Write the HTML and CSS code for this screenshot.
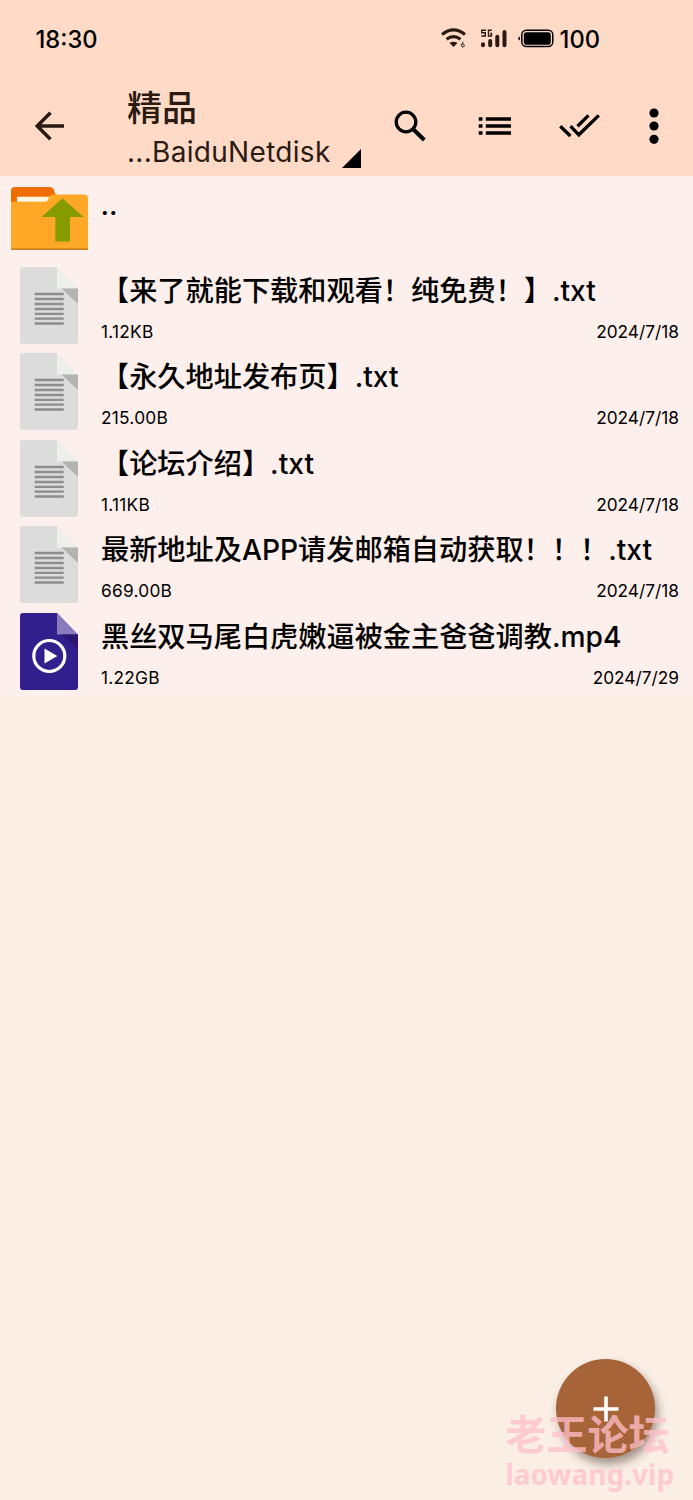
FILE: index.html
```html
<!DOCTYPE html>
<html lang="zh-CN">
<head>
<meta charset="utf-8">
<title>精品</title>
<link rel="stylesheet" href="styles.css">
</head>
<body>
<svg class="defs" width="0" height="0">
  <symbol id="txt" viewBox="0 0 58 77">
    <path d="M3 0H37L58 22V74a3 3 0 0 1-3 3H3a3 3 0 0 1-3-3V3a3 3 0 0 1 3-3Z" fill="#dbdcdb"/>
    <path d="M37 0L58 21.500H37Z" fill="#edefed"/>
    <path d="M41.500 21.500H58V37Z" fill="#b3b3b1"/>
    <path d="M14.700 27H43.700M14.700 32H43.700M14.700 37H43.700M14.700 42H43.700M14.700 46.800H43.700M14.700 51.600H43.700M14.700 56.500H43.700" stroke="#8c8d8c" stroke-width="2.300"/>
  </symbol>
</svg>
<div class="screen">
  <header class="header">
    <div class="status">
      <span class="clock">18:30</span>
      <svg class="status-icons" width="120" height="26" viewBox="0 0 120 26">
        <g fill="none" stroke="#2a1a12" stroke-width="3">
          <path d="M1 9.500Q12.500.2 24 9.500"/>
          <path d="M5.500 14.200Q12.500 9 19.500 14.200"/>
        </g>
        <path d="M8.500 18q4-2.400 8 0l-4 4z" fill="#2a1a12"/>
        <path d="M22.300 16.800l-1.700 2.800" stroke="#2a1a12" fill="none"/>
        <circle cx="21.800" cy="20.500" r="1.500" fill="none" stroke="#2a1a12"/>
        <g stroke="#2a1a12" stroke-width="4" stroke-linecap="round">
          <path d="M42 19.300V20.300M49.200 16V20.300M56.300 11.800V20.300M63.500 7V20.300"/>
        </g>
        <path d="M45 5.200H40.700V7.800H44.300V11H40.300M50.800 5.200H47.500V11H50.500V8.500H49.200" fill="none" stroke="#2a1a12" stroke-width="1.400"/>
        <rect x="80.800" y="5.300" width="31" height="16.300" rx="4.500" fill="none" stroke="#000" stroke-width="1.500"/>
        <rect x="82.800" y="7.200" width="27" height="12.500" rx="2.800" fill="#000"/>
        <path d="M79 11.500v4q-1.800-.5-1.800-2t1.800-2" fill="#000"/>
      </svg>
      <span class="battery">100</span>
    </div>
    <div class="toolbar">
      <svg class="back" width="30" height="30" viewBox="0 0 30 30"><path d="M29 15H3M15.500 1.700L2.200 15L15.500 28.300" fill="none" stroke="#2a1a12" stroke-width="3.500"/></svg>
      <div class="titles">
        <div class="title">精品</div>
        <div class="path"><span>...BaiduNetdisk</span><svg width="19" height="19" viewBox="0 0 19 19"><path d="M19 0V19H0Z"/></svg></div>
      </div>
      <svg class="search" width="32" height="32" viewBox="0 0 32 32"><circle cx="12" cy="12" r="9.800" fill="none" stroke="#000" stroke-width="3.300"/><path d="M19 19L30.300 30" stroke="#000" stroke-width="4"/></svg>
      <svg class="list-icon" width="33" height="20" viewBox="0 0 33 20"><path d="M.7 3H4.500M7.800 3H33M.7 10H4.500M7.800 10H33M.7 17H4.500M7.800 17H33" stroke="#000" stroke-width="3.600"/></svg>
      <svg class="checks" width="41" height="24" viewBox="0 0 41 24"><path d="M1.300 12.300L11.400 22M11.500 12.200L19.800 20.800L39.800 1.400M18.500 12.200L29.500 1.400" fill="none" stroke="#000" stroke-width="3.300"/></svg>
      <svg class="more" width="10" height="36" viewBox="0 0 10 36"><circle cx="5" cy="5" r="4.600"/><circle cx="5" cy="18" r="4.600"/><circle cx="5" cy="31.300" r="4.600"/></svg>
    </div>
  </header>
  <main class="files">
    <div class="row parent">
      <svg class="folder" width="77" height="63" viewBox="0 0 77 63">
        <path d="M0 16V4Q0 0 4 0H39Q41.500 0 42.500 2L47 14V20H0Z" fill="#ef6c00"/>
        <path d="M6 9.800H40V16H6Z" fill="#fff5e0"/>
        <path d="M0 14.700H34Q37 14.500 37.500 11Q38.500 7.500 42 7.500H73Q77 7.500 77 11V63H0Z" fill="#ffa726"/>
        <path d="M0 61.300H77V63H0Z" fill="#cf8420"/>
        <path d="M51.500 11.300L72.500 30H59V54.500H44.300V30H30.500Z" fill="#869b00"/>
      </svg>
      <div class="info"><div class="name">..</div></div>
    </div>
    <div class="row">
      <svg class="file" width="58" height="77"><use href="#txt"/></svg>
      <div class="info"><div class="name">【来了就能下载和观看！纯免费！】.txt</div><div class="meta"><span class="size">1.12KB</span><span class="date">2024/7/18</span></div></div>
    </div>
    <div class="row">
      <svg class="file" width="58" height="77"><use href="#txt"/></svg>
      <div class="info"><div class="name">【永久地址发布页】.txt</div><div class="meta"><span class="size">215.00B</span><span class="date">2024/7/18</span></div></div>
    </div>
    <div class="row">
      <svg class="file" width="58" height="77"><use href="#txt"/></svg>
      <div class="info"><div class="name">【论坛介绍】.txt</div><div class="meta"><span class="size">1.11KB</span><span class="date">2024/7/18</span></div></div>
    </div>
    <div class="row">
      <svg class="file" width="58" height="77"><use href="#txt"/></svg>
      <div class="info"><div class="name">最新地址及APP请发邮箱自动获取！！！.txt</div><div class="meta"><span class="size">669.00B</span><span class="date">2024/7/18</span></div></div>
    </div>
    <div class="row">
      <svg class="file" width="58" height="77" viewBox="0 0 58 77">
        <path d="M3 0H37L58 22V74a3 3 0 0 1-3 3H3a3 3 0 0 1-3-3V3a3 3 0 0 1 3-3Z" fill="#311f8e"/>
        <path d="M37 0L58 21.500H37Z" fill="#8a79bb"/>
        <path d="M41.500 21.500H58V37Z" fill="#29176f"/>
        <circle cx="29.300" cy="43" r="15.500" fill="none" stroke="#fff" stroke-width="3.200"/>
        <path d="M24.500 35.500V50.500L37.300 43Z" fill="#fff"/>
      </svg>
      <div class="info"><div class="name">黑丝双马尾白虎嫩逼被金主爸爸调教.mp4</div><div class="meta"><span class="size">1.22GB</span><span class="date">2024/7/29</span></div></div>
    </div>
  </main>
  <div class="fab"><svg width="26" height="26" viewBox="0 0 26 26"><path d="M13 .5V25.500M.5 13H25.500" stroke="#fff" stroke-width="3.600"/></svg></div>
  <div class="mark"><div class="mark-name">老王论坛</div><div class="mark-site">laowang.vip</div></div>
</div>
</body>
</html>
```
FILE: styles.css
```css
* { box-sizing: border-box; }
body { margin: 0; background: #faeee5; font-family: Inter, "Noto Sans CJK SC", sans-serif; color: #000; }
svg { display: block; flex: none; }
.defs { position: absolute; }
.screen { position: relative; width: 693px; height: 1500px; overflow: hidden; }
.header { height: 176px; background: #ffdac7; }
.status { height: 76px; padding: 0 93px 0 35.500px; display: flex; align-items: center; font-size: 23.700px; font-weight: 500; }
.clock { margin-right: auto; padding-top: 2px; }
.status-icons { margin-right: -1px; }
.battery { padding-top: 2px; }
.toolbar { display: flex; height: 100px; padding-left: 35px; }
.back { margin-top: 35px; }
.titles { width: 234px; margin-left: 62px; color: #2a1a12; white-space: nowrap; }
.title { height: 60px; line-height: 64px; font-size: 35px; font-weight: 500; }
.path { display: flex; font-size: 28px; line-height: 34px; letter-spacing: 0.300px; margin-top: -1px; }
.path svg { margin: 14px 0 0 auto; fill: #000; }
.search { margin: 34px 0 0 33px; }
.list-icon { margin: 40px 0 0 52px; }
.checks { margin: 38px 0 0 48px; }
.more { margin: 32px 0 0 49px; }
.files { height: 520px; background: #fdefeb; }
.row { display: flex; height: 86.500px; padding: 4.300px 14px 0 20.400px; }
.parent { padding: 11px 14px 0 11px; }
.info { flex: 1; margin-left: 22.600px; white-space: nowrap; }
.parent .info { margin-left: 12.500px; margin-top: -6px; }
.name { height: 48px; line-height: 49px; font-size: 28.200px; font-weight: 500; text-spacing-trim: space-all; }
.meta { display: flex; justify-content: space-between; line-height: 24px; margin-top: 5px; font-size: 17.300px; }
.size { letter-spacing: 0.250px; }
.fab { position: absolute; left: 556px; top: 1359px; width: 99px; height: 99px; border-radius: 50%; background: #a76439; display: grid; place-items: center; box-shadow: 3px 6px 10px rgba(40, 20, 10, 0.420); }
.mark { position: absolute; left: 505.500px; top: 1414px; color: rgba(255, 192, 203, 0.750); white-space: nowrap; font-weight: 700; }
.mark-name { font-size: 41px; line-height: 43px; }
.mark-site { font-family: "Noto Sans", sans-serif; font-size: 28px; line-height: 34px; margin-top: 0; }
```
